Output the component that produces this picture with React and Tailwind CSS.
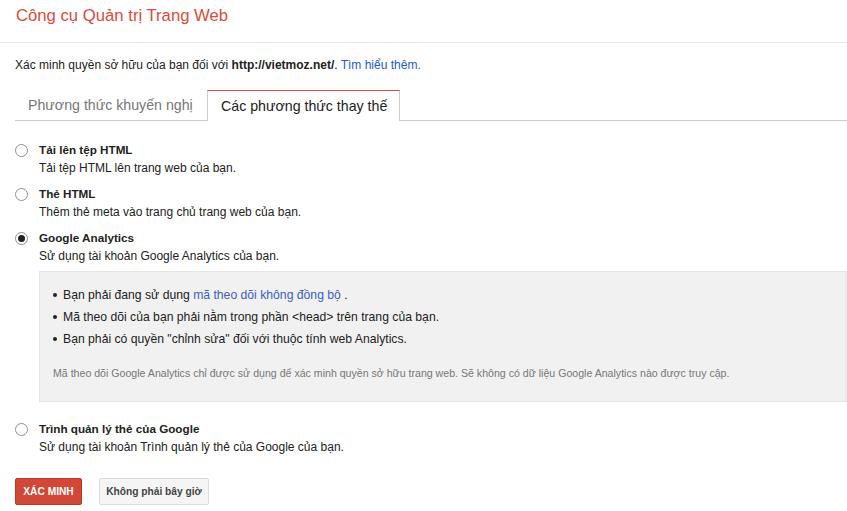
const OPTIONS = [
  { id: 'html_file', title: 'Tải lên tệp HTML', desc: 'Tải tệp HTML lên trang web của bạn.' },
  { id: 'html_tag', title: 'Thẻ HTML', desc: 'Thêm thẻ meta vào trang chủ trang web của bạn.' },
  { id: 'analytics', title: 'Google Analytics', desc: 'Sử dụng tài khoản Google Analytics của bạn.' },
  { id: 'gtm', title: 'Trình quản lý thẻ của Google', desc: 'Sử dụng tài khoản Trình quản lý thẻ của Google của bạn.' },
]

function Radio({ checked }) {
  return (
    <span className="mt-[3px] flex h-[13px] w-[13px] shrink-0 items-center justify-center rounded-full border border-[#8f8f8f] bg-white">
      {checked && <span className="h-[7px] w-[7px] rounded-full bg-[#222]" />}
    </span>
  )
}

function AnalyticsDetails() {
  return (
    <div className="mt-[6px] ml-[24px] h-[131px] border border-[#e5e5e5] bg-[#f1f1f1] pt-[14px] pl-[13px]">
      <ul className="space-y-[4px] text-[12.2px] leading-[18px] text-[#222]">
        <li className="flex items-center">
          <span className="mr-[6px] h-[4px] w-[4px] rounded-full bg-[#222]" />
          <span>
            Bạn phải đang sử dụng <a className="text-[#3b5fc4]">mã theo dõi không đồng bộ</a> .
          </span>
        </li>
        <li className="flex items-center">
          <span className="mr-[6px] h-[4px] w-[4px] rounded-full bg-[#222]" />
          <span>Mã theo dõi của bạn phải nằm trong phần &lt;head&gt; trên trang của bạn.</span>
        </li>
        <li className="flex items-center">
          <span className="mr-[6px] h-[4px] w-[4px] rounded-full bg-[#222]" />
          <span>Bạn phải có quyền "chỉnh sửa" đối với thuộc tính web Analytics.</span>
        </li>
      </ul>
      <p className="mt-[18px] text-[10.6px] leading-[14px] text-[#777]">
        Mã theo dõi Google Analytics chỉ được sử dụng để xác minh quyền sở hữu trang web. Sẽ không có dữ liệu Google Analytics nào được truy cập.
      </p>
    </div>
  )
}

export default function App() {
  const selected = 'analytics'

  return (
    <div className="h-[511px] w-full bg-white font-['Liberation_Sans',Arial,sans-serif] text-[#222]">
      <header className="h-[43px] border-b border-[#e5e5e5] pl-[16px] pt-[6px]">
        <h1 className="text-[16.7px] leading-[20px] text-[#dd4b39]">Công cụ Quản trị Trang Web</h1>
      </header>

      <div className="pl-[15px]">
        <p className="mt-[14px] text-[12px] leading-[16px]">
          Xác minh quyền sở hữu của bạn đối với <b>http://vietmoz.net/</b>.{' '}
          <a className="text-[#1a5ad8]">Tìm hiểu thêm.</a>
        </p>

        <div className="mt-[17px] flex h-[31px] border-b border-[#cccccc]">
          <button className="w-[192px] pl-[13px] text-left text-[14.2px] leading-[28px] text-[#777]">
            Phương thức khuyến nghị
          </button>
          <button className="-mb-px w-[193px] border border-b-0 border-[#cccccc] border-t-[#dd4b39] bg-white pl-[13px] text-left text-[14.2px] leading-[28px] text-[#222]">
            Các phương thức thay thế
          </button>
        </div>

        <div className="mt-[20px]">
          {OPTIONS.map((opt, i) => (
            <div key={opt.id} className={i === 0 ? '' : i === 3 ? 'mt-[18px]' : 'mt-[8px]'}>
              <div className="flex gap-[11px]">
                <Radio checked={opt.id === selected} />
                <div className="text-[12px] leading-[18px]">
                  <div className="text-[11.7px] font-bold">{opt.title}</div>
                  <div>{opt.desc}</div>
                </div>
              </div>
              {opt.id === selected && <AnalyticsDetails />}
            </div>
          ))}
        </div>

        <div className="mt-[22px] flex gap-[17px]">
          <button className="h-[27px] w-[67px] rounded-[2px] border border-[#c6322a] bg-[#d14836] text-[10.2px] font-bold text-white">
            XÁC MINH
          </button>
          <button className="h-[27px] w-[110px] rounded-[2px] border border-[#dcdcdc] bg-[#f5f5f5] text-[10.2px] font-bold text-[#444]">
            Không phải bây giờ
          </button>
        </div>
      </div>
    </div>
  )
}
